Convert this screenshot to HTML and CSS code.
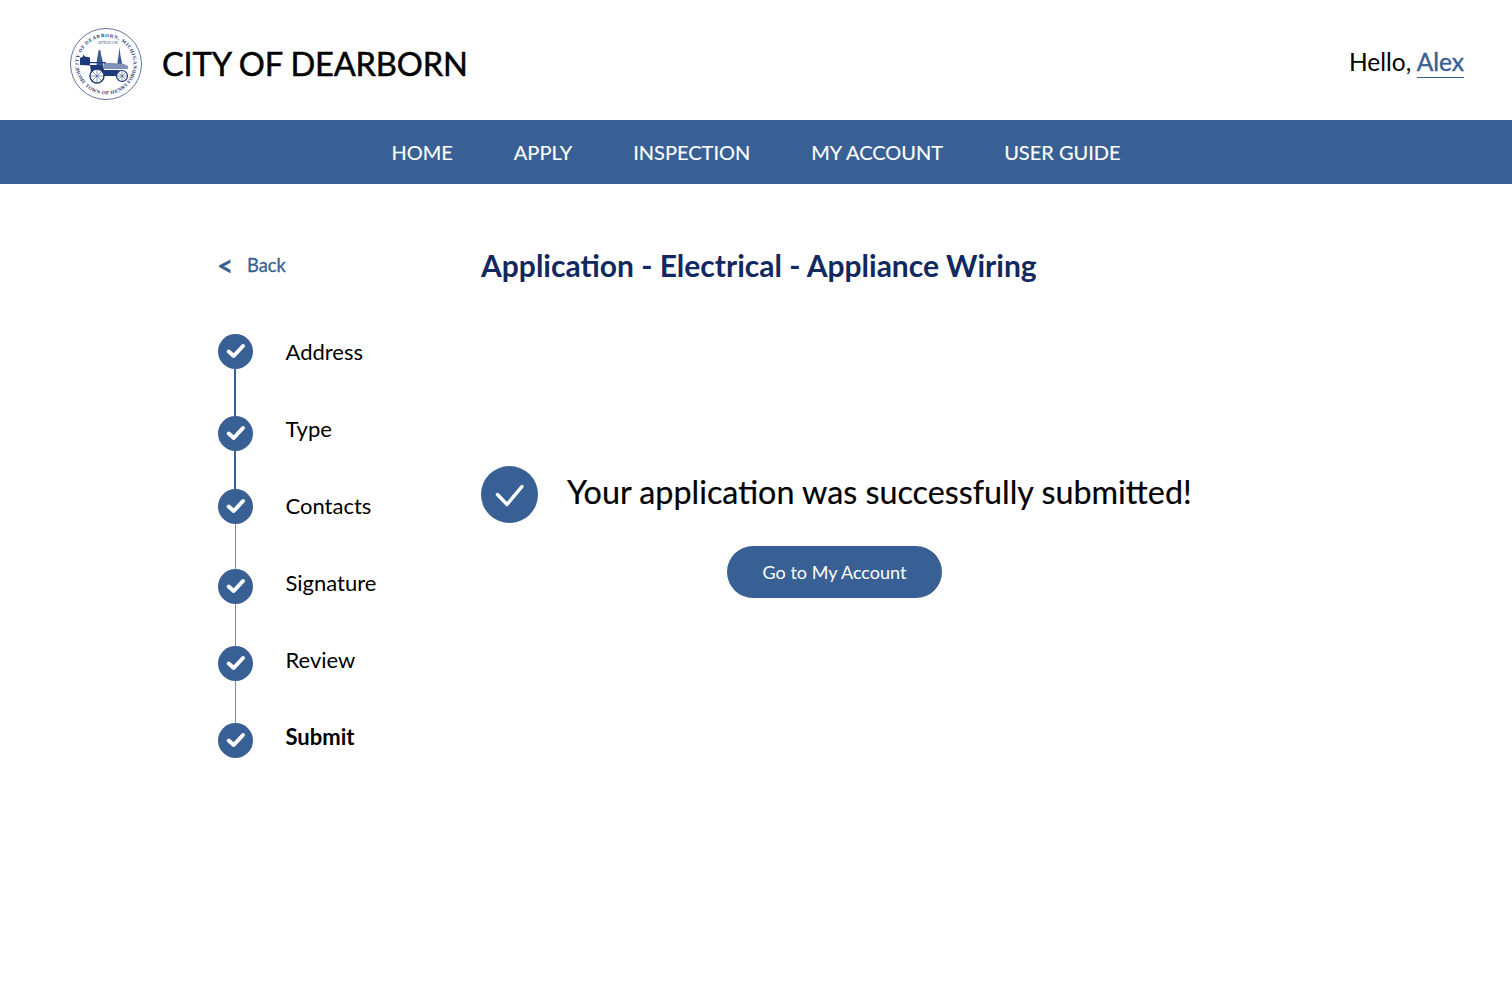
FILE: index.html
```html
<!DOCTYPE html>
<html lang="en">
<head>
  <meta charset="UTF-8">
  <meta name="viewport" content="width=device-width, initial-scale=1.0">
  <title>City of Dearborn - Application submitted</title>
  <link rel="stylesheet" href="styles.css">
</head>
<body>
  <header class="site-header">
    <div class="brand">
      <svg class="seal" viewBox="0 0 72 72" aria-hidden="true">
        <defs>
          <path id="sealTop" d="M11 48a27.500 27.500 0 1 1 50 0"/>
          <path id="sealBottom" d="M5.500 36a30.500 30.500 0 0 0 61 0"/>
        </defs>
        <circle cx="36" cy="36" r="35.500" fill="none" stroke="#1f3a7a" stroke-width=".7"/>
        <text class="seal-text"><textPath href="#sealTop" startOffset="50%" text-anchor="middle">CITY OF DEARBORN, MICHIGAN</textPath></text>
        <text class="seal-text seal-text-low"><textPath href="#sealBottom" startOffset="50%" text-anchor="middle">HOME TOWN OF HENRY FORD</textPath></text>
        <text class="seal-year" x="38" y="15.500" text-anchor="middle">SETTLED 1786</text>
        <!-- left building, statue and church spire -->
        <path d="M10 37v-7l3-1.500v-2l2 2 5 1v8z" fill="#1f3a7a"/>
        <path d="M26 43l1-12 1-5 .5-4 2 .5.5 4 2 8 1 8z" fill="#3d5a94"/>
        <path d="M47 37l1.500-9 1-9 1 9 2 9z" fill="#3d5a94"/>
        <path d="M34 35l8 0 12 1 4 2v3H34z" fill="#7f93b8"/>
        <!-- car -->
        <path d="M20 37h12l2 5h14l7 2 2 4H33l-2-3H21z" fill="#1f3a7a"/>
        <path d="M20 34h16v1.200H20z" fill="#1f3a7a"/>
        <circle cx="27" cy="48" r="7" fill="#fff" stroke="#1f3a7a" stroke-width="1.400"/>
        <circle cx="52" cy="48" r="5.500" fill="#fff" stroke="#1f3a7a" stroke-width="1.200"/>
        <path d="M27 41v14M20 48h14M22 43l10 10M32 43L22 53M52 42.500v11M46.500 48h11M48 44l8 8M56 44l-8 8" stroke="#1f3a7a" stroke-width=".5"/>
      </svg>
      <span class="brand-name">CITY OF DEARBORN</span>
    </div>
    <div class="greeting">Hello, <a href="#" class="user-link">Alex</a></div>
  </header>

  <nav class="main-nav">
    <a href="#">HOME</a>
    <a href="#">APPLY</a>
    <a href="#">INSPECTION</a>
    <a href="#">MY ACCOUNT</a>
    <a href="#">USER GUIDE</a>
  </nav>

  <main class="content">
    <aside class="sidebar">
      <a href="#" class="back-link"><span class="back-arrow">&lt;</span>Back</a>
      <div class="stepper">
        <div class="step-track">
          <span class="step-dot"><svg viewBox="0 0 35 35"><path d="M10.700 17.500l5 4.500 9.300-10"/></svg></span>
          <span class="step-line done line-a"></span>
          <span class="step-dot"><svg viewBox="0 0 35 35"><path d="M10.700 17.500l5 4.500 9.300-10"/></svg></span>
          <span class="step-line done line-b"></span>
          <span class="step-dot"><svg viewBox="0 0 35 35"><path d="M10.700 17.500l5 4.500 9.300-10"/></svg></span>
          <span class="step-line line-c"></span>
          <span class="step-dot"><svg viewBox="0 0 35 35"><path d="M10.700 17.500l5 4.500 9.300-10"/></svg></span>
          <span class="step-line line-d"></span>
          <span class="step-dot"><svg viewBox="0 0 35 35"><path d="M10.700 17.500l5 4.500 9.300-10"/></svg></span>
          <span class="step-line line-d"></span>
          <span class="step-dot"><svg viewBox="0 0 35 35"><path d="M10.700 17.500l5 4.500 9.300-10"/></svg></span>
        </div>
        <ul class="step-labels">
          <li>Address</li>
          <li>Type</li>
          <li>Contacts</li>
          <li>Signature</li>
          <li>Review</li>
          <li class="current">Submit</li>
        </ul>
      </div>
    </aside>

    <section class="main-panel">
      <h1>Application - Electrical - Appliance Wiring</h1>
      <div class="success-row">
        <span class="success-icon"><svg viewBox="0 0 57 57"><path d="M16.500 28.500l9.500 10 15-18"/></svg></span>
        <p>Your application was successfully submitted!</p>
      </div>
      <button type="button" class="account-btn">Go to My Account</button>
    </section>
  </main>
</body>
</html>
```

FILE: styles.css
```css
body {
  margin: 0;
  background-color: #fff;
  color: #000;
  font-family: Lato, "Open Sans", sans-serif;
}

a {
  text-decoration: none;
}

/* Header */
.site-header {
  height: 120px;
  box-sizing: border-box;
  padding: 0 48px 0 70px;
  display: flex;
  justify-content: space-between;
  align-items: center;
}

.brand {
  display: flex;
  align-items: center;
  gap: 20px;
  margin-top: 8px;
}

.seal {
  width: 72px;
  height: 72px;
}

.seal-text {
  font-family: "Liberation Serif", serif;
  font-size: 5px;
  font-weight: 700;
  letter-spacing: .6px;
  fill: #1f3a7a;
}

.seal-text-low {
  letter-spacing: .4px;
}

.seal-year {
  font-family: "Liberation Serif", serif;
  font-size: 3px;
  fill: #1f3a7a;
}

.brand-name {
  margin-top: -2px;
  font-size: 32.600px;
  letter-spacing: -.15px;
  -webkit-text-stroke: .5px #000;
}

.greeting {
  font-size: 24.500px;
  margin-top: 3px;
}

.user-link {
  color: #386094;
  padding-bottom: 1px;
  border-bottom: 1px solid #386094;
  -webkit-text-stroke: .4px #386094;
}

/* Nav bar */
.main-nav {
  height: 64px;
  box-sizing: border-box;
  padding-bottom: 1px;
  background-color: #386094;
  display: flex;
  justify-content: center;
  align-items: center;
  gap: 61px;
}

.main-nav a {
  color: #fff;
  font-size: 20px;
  -webkit-text-stroke: .15px #fff;
}

/* Page content */
.content {
  display: flex;
  padding: 63px 0 0 218px;
}

.sidebar {
  width: 263px;
}

.back-link {
  display: flex;
  align-items: center;
  height: 36px;
  color: #386094;
  font-size: 18.300px;
  -webkit-text-stroke: .3px #386094;
}

.back-arrow {
  width: 30px;
  margin-left: -1px;
  font-size: 28px;
  font-weight: 700;
}

/* Stepper */
.stepper {
  display: flex;
  gap: 32.500px;
  margin-top: 51px;
}

.step-track {
  display: flex;
  flex-direction: column;
  align-items: center;
  width: 35px;
}

.step-dot {
  width: 35px;
  height: 35px;
  border-radius: 50%;
  background-color: #386094;
  flex-shrink: 0;
}

.step-dot svg {
  display: block;
  fill: none;
  stroke: #fff;
  stroke-width: 4;
  stroke-linecap: round;
  stroke-linejoin: round;
}

.step-line {
  width: 1px;
  background-color: #7d8ba0;
}

.step-line.done {
  width: 2px;
  margin-right: 1px;
  background-color: #386094;
}

.line-a {
  height: 47px;
}

.line-b {
  height: 38px;
}

.line-c {
  height: 45px;
}

.line-d {
  height: 42px;
}

.step-labels {
  list-style: none;
  margin: 0;
  padding: 3px 0 0;
  display: flex;
  flex-direction: column;
  gap: 47px;
}

.step-labels li {
  font-size: 22px;
  line-height: 30px;
}

.step-labels .current {
  font-weight: 700;
}

/* Right panel */
.main-panel h1 {
  margin: -1px 0 0;
  color: #12295f;
  font-size: 30px;
  line-height: 38px;
  font-weight: 700;
}

.success-row {
  display: flex;
  align-items: center;
  gap: 29px;
  margin-top: 182px;
}

.success-row p {
  margin: 0 0 6px;
  font-size: 32.300px;
  -webkit-text-stroke: .2px #000;
}

.success-icon {
  width: 57px;
  height: 57px;
  border-radius: 50%;
  background-color: #386094;
}

.success-icon svg {
  display: block;
  fill: none;
  stroke: #fff;
  stroke-width: 3.500;
  stroke-linecap: round;
  stroke-linejoin: round;
}

.account-btn {
  display: block;
  width: 215px;
  height: 52px;
  margin: 23px 0 0 246px;
  padding: 0;
  border: none;
  border-radius: 26px;
  background-color: #386094;
  color: #fff;
  font-family: inherit;
  font-size: 18px;
  cursor: pointer;
}
```
